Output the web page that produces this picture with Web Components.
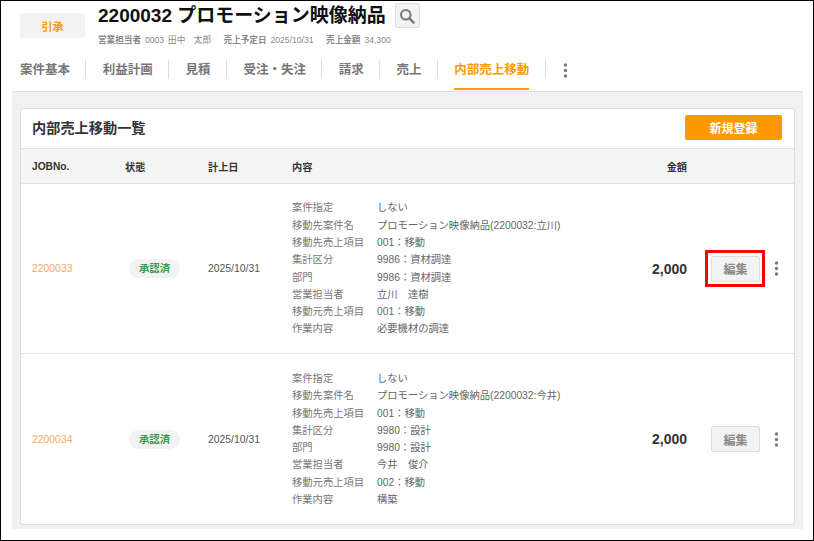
<!DOCTYPE html>
<html lang="ja">
<head>
<meta charset="UTF-8">
<title>内部売上移動一覧</title>
<style>
  html, body { margin: 0; padding: 0; background: #fff; }
  body { font-family: "Liberation Sans", "Noto Sans CJK JP", sans-serif; }
</style>
</head>
<body>
<app-frame>
  <project-head slot="head"></project-head>
  <tab-bar slot="tabs"></tab-bar>
  <transfer-card slot="main">
    <transfer-row job="2200033" date="2025/10/31" amount="2,000" marked>
      <detail-line label="案件指定">しない</detail-line>
      <detail-line label="移動先案件名">プロモーション映像納品(2200032:立川)</detail-line>
      <detail-line label="移動先売上項目">001：移動</detail-line>
      <detail-line label="集計区分">9986：資材調達</detail-line>
      <detail-line label="部門">9986：資材調達</detail-line>
      <detail-line label="営業担当者">立川　達樹</detail-line>
      <detail-line label="移動元売上項目">001：移動</detail-line>
      <detail-line label="作業内容">必要機材の調達</detail-line>
    </transfer-row>
    <transfer-row job="2200034" date="2025/10/31" amount="2,000">
      <detail-line label="案件指定">しない</detail-line>
      <detail-line label="移動先案件名">プロモーション映像納品(2200032:今井)</detail-line>
      <detail-line label="移動先売上項目">001：移動</detail-line>
      <detail-line label="集計区分">9980：設計</detail-line>
      <detail-line label="部門">9980：設計</detail-line>
      <detail-line label="営業担当者">今井　俊介</detail-line>
      <detail-line label="移動元売上項目">002：移動</detail-line>
      <detail-line label="作業内容">構築</detail-line>
    </transfer-row>
  </transfer-card>
</app-frame>

<script>
  const DOTS = `<svg width="5" height="15" viewBox="0 0 5 15" fill="#777"><circle cx="2.5" cy="2" r="1.7"/><circle cx="2.5" cy="7.5" r="1.7"/><circle cx="2.5" cy="13" r="1.7"/></svg>`;

  class AppFrame extends HTMLElement {
    connectedCallback() {
      this.attachShadow({ mode: 'open' }).innerHTML = `
        <style>
          :host { display: flex; flex-direction: column; box-sizing: border-box; width: 814px; height: 541px;
                  border: 1px solid #000; overflow: hidden; background: #fff; }
          .main { margin: 0 10px 0 11px; height: 438px; box-sizing: border-box; padding: 16px 8px 5px;
                  background: #f1f1f1; border-top: 1px solid #ddd; }
        </style>
        <slot name="head"></slot>
        <slot name="tabs"></slot>
        <div class="main"><slot name="main"></slot></div>`;
    }
  }

  class ProjectHead extends HTMLElement {
    connectedCallback() {
      this.attachShadow({ mode: 'open' }).innerHTML = `
        <style>
          :host { display: flex; height: 49px; box-sizing: border-box; padding: 2px 0 0 19px; }
          .badge { width: 65px; height: 25px; margin: 10px 13px 0 0; background: #f3f3f3; color: #f90;
                   font-size: 11px; font-weight: bold; display: flex; align-items: center; justify-content: center; border-radius: 2px; }
          .top { display: flex; align-items: flex-start; gap: 9px; }
          h1 { margin: 0; font-size: 19px; line-height: 25px; font-weight: bold; color: #111; white-space: nowrap; }
          .search { width: 25px; height: 25px; box-sizing: border-box; background: #f3f3f3; border: 1px solid #ddd; border-radius: 2px;
                    display: flex; align-items: center; justify-content: center; }
          .meta { display: flex; gap: 12.5px; margin-top: 6px; font-size: 8.6px; line-height: 12px; color: #888; white-space: nowrap; word-spacing: 1.6px; }
          .meta b { font-weight: bold; color: #888; }
        </style>
        <div class="badge">引承</div>
        <div>
          <div class="top">
            <h1>2200032 プロモーション映像納品</h1>
            <div class="search">
              <svg width="16" height="16" viewBox="0 0 16 16" fill="none" stroke="#777" stroke-width="2"><circle cx="6.8" cy="6.8" r="4.8"/><path d="M10.4 10.4l4.2 4.2" stroke-width="2.4" stroke-linecap="round"/></svg>
            </div>
          </div>
          <div class="meta">
            <span><b>営業担当者</b> 0003 田中　太郎</span>
            <span><b>売上予定日</b> 2025/10/31</span>
            <span><b>売上金額</b> 34,300</span>
          </div>
        </div>`;
    }
  }

  class TabBar extends HTMLElement {
    connectedCallback() {
      const names = ['案件基本', '利益計画', '見積', '受注・失注', '請求', '売上', '内部売上移動'];
      const tabs = names.map((n, i) =>
        `<div class="tab ${i === names.length - 1 ? 'on' : ''}"><span>${n}</span></div>`).join('');
      this.attachShadow({ mode: 'open' }).innerHTML = `
        <style>
          :host { display: flex; height: 41px; box-sizing: border-box; padding-left: 19px; align-items: flex-start; }
          .tab { height: 41px; box-sizing: border-box; padding-right: 16.4px; margin-right: 16.4px; position: relative;
                 font-size: 12.5px; font-weight: bold; color: #777; white-space: nowrap; }
          .tab::after { content: ""; position: absolute; right: 0; top: 10px; width: 1px; height: 19px; background: #ddd; }
          .tab span { display: block; height: 40px; line-height: 41px; box-sizing: border-box; }
          .on { color: #f90; }
          .on span { border-bottom: 2px solid #f90; }
          .more { height: 40px; display: flex; align-items: center; margin-left: 1px; }
        </style>
        ${tabs}
        <div class="more">${DOTS}</div>`;
    }
  }

  class TransferCard extends HTMLElement {
    connectedCallback() {
      this.attachShadow({ mode: 'open' }).innerHTML = `
        <style>
          :host { display: block; height: 417px; box-sizing: border-box; background: #fff; border: 1px solid #ddd; border-radius: 3px; }
          .title { display: flex; justify-content: space-between; align-items: center; height: 39px; box-sizing: content-box;
                   padding: 0 12px 0 11px; border-bottom: 1px solid #e2e2e2; }
          h2 { margin: 0 0 4px; font-size: 14.2px; font-weight: bold; color: #333; white-space: nowrap; }
          button { width: 97px; height: 25px; margin-bottom: 2px; border: 0; border-radius: 2px; background: #f90; color: #fff;
                   font: bold 12px "Liberation Sans", "Noto Sans CJK JP", sans-serif; }
          .cols { display: grid; grid-template-columns: 93px 83px 84px 1fr auto; align-items: center; height: 34px;
                  padding: 0 107px 0 11px; background: #f5f5f5; border-bottom: 1px solid #e2e2e2;
                  font-size: 10.2px; font-weight: bold; color: #333; }
        </style>
        <div class="title"><h2>内部売上移動一覧</h2><button>新規登録</button></div>
        <div class="cols"><div>JOBNo.</div><div>状態</div><div>計上日</div><div>内容</div><div>金額</div></div>
        <slot></slot>`;
    }
  }

  class TransferRow extends HTMLElement {
    connectedCallback() {
      const job = this.getAttribute('job');
      const date = this.getAttribute('date');
      const amount = this.getAttribute('amount');
      const marked = this.hasAttribute('marked');
      this.attachShadow({ mode: 'open' }).innerHTML = `
        <style>
          :host { display: grid; grid-template-columns: 93px 83px 84px 1fr 81px 73px 34px; align-items: center; height: 170px;
                  box-sizing: border-box; padding-left: 11px; border-bottom: 1px solid #e2e2e2;
                  font-size: 10.4px; color: #555; }
          :host(:last-child) { border-bottom: 0; }
          .job { color: #f5a860; }
          .state { justify-self: start; margin-left: 4px; width: 51px; height: 19px; line-height: 19px; text-align: center;
                   border-radius: 10px; background: #f2f2f2; color: #3a9a4a; font-weight: bold; }
          .details { align-self: start; margin-top: 15.4px; }
          :host(:last-child) .details { margin-top: 16px; }
          .amount { text-align: right; font-size: 14px; font-weight: bold; color: #333; }
          .edit-cell { position: relative; margin-left: 24px; width: 49px; height: 26px; }
          .edit { display: block; width: 49px; height: 26px; box-sizing: border-box; background: #f3f3f3; border: 1px solid #ddd; border-radius: 2px;
                  color: #888; font: bold 12px "Liberation Sans", "Noto Sans CJK JP", sans-serif; padding: 0; }
          .mark { position: absolute; left: -6px; top: -6px; width: 60px; height: 37px; box-sizing: border-box; border: 3px solid #f00; }
          .more { margin-left: 14px; line-height: 0; }
        </style>
        <div class="job">${job}</div>
        <div class="state">承認済</div>
        <div>${date}</div>
        <div class="details"><slot></slot></div>
        <div class="amount">${amount}</div>
        <div class="edit-cell"><button class="edit">編集</button>${marked ? '<div class="mark"></div>' : ''}</div>
        <div class="more">${DOTS}</div>`;
    }
  }

  class DetailLine extends HTMLElement {
    connectedCallback() {
      this.attachShadow({ mode: 'open' }).innerHTML = `
        <style>
          :host { display: grid; grid-template-columns: 85px 1fr; height: 17.3px; line-height: 17.3px; font-size: 10.3px; white-space: nowrap; }
          .l { color: #777; }
          .v { color: #666; }
        </style>
        <div class="l">${this.getAttribute('label')}</div>
        <div class="v"><slot></slot></div>`;
    }
  }

  customElements.define('app-frame', AppFrame);
  customElements.define('project-head', ProjectHead);
  customElements.define('tab-bar', TabBar);
  customElements.define('transfer-card', TransferCard);
  customElements.define('transfer-row', TransferRow);
  customElements.define('detail-line', DetailLine);
</script>
</body>
</html>
